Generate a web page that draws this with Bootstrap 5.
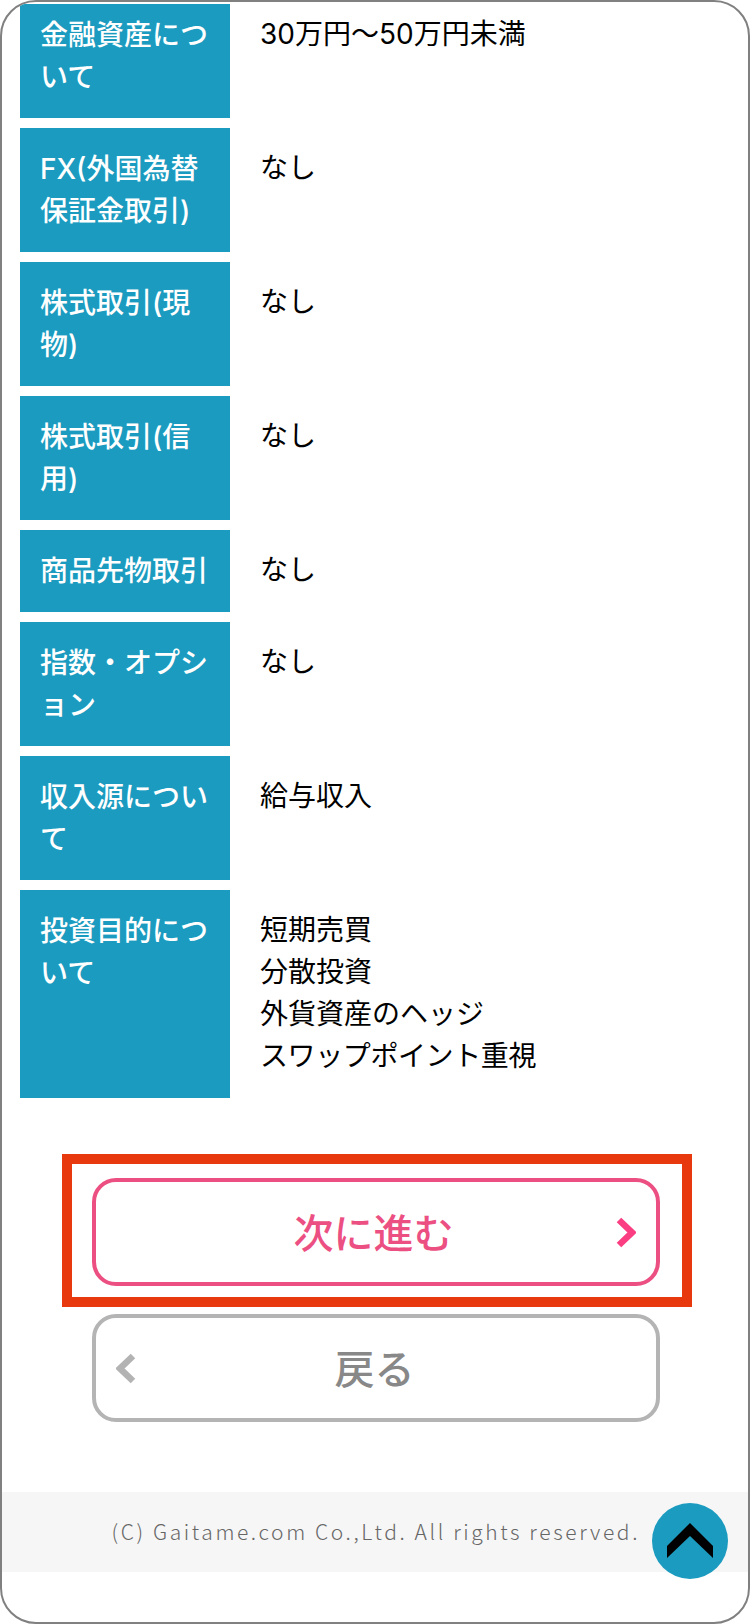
<!DOCTYPE html>
<html lang="ja">
<head>
<meta charset="utf-8">
<title>確認</title>
<link href="https://cdn.jsdelivr.net/npm/bootstrap@5.3.0/dist/css/bootstrap.min.css" rel="stylesheet">
<style>
html, body { margin: 0; background: #fff; }
body { font-family: "Noto Sans CJK JP", "Liberation Sans", sans-serif; color: #000; width: 750px; }
.phone-frame { height: 1624px; border: 2px solid #808080; border-radius: 36px; overflow: hidden; padding-top: 2px; position: relative; }
.info-list { padding-left: 18px; margin: 0; }
.info-row { margin-bottom: 10px; }
.info-row:last-child { margin-bottom: 0; }
.info-head { width: 210px; flex: none; background: #1b9bbf; color: #fff; font-family: Inter, "Noto Sans CJK JP", sans-serif; font-size: 28px; line-height: 42px; font-weight: 500; padding: 20px; margin: 0; }
.info-head.cut-top { padding-top: 10px; }
.info-val { font-family: Inter, "Noto Sans CJK JP", sans-serif; font-size: 28px; line-height: 42px; padding: 19px 0 21px 30px; margin: 0; }
.info-val.cut-top { padding-top: 9px; }
.tight-kana { letter-spacing: -0.4px; }
.next-box { width: 630px; height: 153px; margin: 56px 0 0 60px; border: 10px solid #e8380d; padding: 14px 0 0 20px; }
.act-btn { width: 568px; height: 108px; background: #fff; border-width: 4px; border-style: solid; border-radius: 24px; padding: 0 20px; font-size: 40px; font-weight: 500; line-height: 1; display: grid; grid-template-columns: 1fr auto 1fr; align-items: center; }
.act-label { margin-right: 5px; position: relative; top: -1px; }
.act-back .act-label { margin-right: 3px; }
.act-next { border-color: #ec5082; color: #ec5082; }
.act-next:hover { border-color: #ec5082; color: #ec5082; background: #fff; }
.act-back { border-color: #b4b4b4; color: #888; margin: 7px 0 0 90px; }
.act-back:hover { border-color: #b4b4b4; color: #888; background: #fff; }
.act-next .chev { justify-self: end; }
.act-back .chev { justify-self: start; }
.chev { width: 20px; height: 31px; display: block; }
.foot-band { height: 80px; margin-top: 70px; background: #f6f6f6; color: #666; font-size: 21px; font-weight: 300; letter-spacing: 2.6px; padding-right: 108px; }
.to-top { position: absolute; left: 650px; top: 1501px; width: 76px; height: 76px; border-radius: 50%; background: #1b9bbf; }
.to-top svg { display: block; }
</style>
</head>
<body>
<div class="phone-frame">
  <div class="info-list">
    <div class="info-row d-flex"><h2 class="info-head cut-top">金融資産について</h2><p class="info-val cut-top">30万円〜50万円未満</p></div>
    <div class="info-row d-flex"><h2 class="info-head">FX(外国為替保証金取引)</h2><p class="info-val">なし</p></div>
    <div class="info-row d-flex"><h2 class="info-head">株式取引(現物)</h2><p class="info-val">なし</p></div>
    <div class="info-row d-flex"><h2 class="info-head">株式取引(信用)</h2><p class="info-val">なし</p></div>
    <div class="info-row d-flex"><h2 class="info-head">商品先物取引</h2><p class="info-val">なし</p></div>
    <div class="info-row d-flex"><h2 class="info-head">指数・オプション</h2><p class="info-val">なし</p></div>
    <div class="info-row d-flex"><h2 class="info-head">収入源について</h2><p class="info-val">給与収入</p></div>
    <div class="info-row d-flex"><h2 class="info-head">投資目的について</h2><p class="info-val">短期売買<br>分散投資<br>外貨資産のヘッジ<br><span class="tight-kana">スワップポイント重視</span></p></div>
  </div>
  <div class="next-box">
    <a href="#" class="btn act-btn act-next">
      <span></span><span class="act-label">次に進む</span>
      <svg class="chev" viewBox="0 0 20 31"><polyline points="3,3 16,15.5 3,28" fill="none" stroke="#fb3d82" stroke-width="6.5"/></svg>
    </a>
  </div>
  <a href="#" class="btn act-btn act-back">
    <svg class="chev" viewBox="0 0 20 31"><polyline points="17,3 4,15.5 17,28" fill="none" stroke="#b3b3b3" stroke-width="6.5"/></svg>
    <span class="act-label">戻る</span><span></span>
  </a>
  <footer class="foot-band d-flex align-items-center justify-content-end">(C) Gaitame.com Co.,Ltd. All rights reserved.</footer>
  <a href="#" class="to-top" aria-label="ページ上部へ">
    <svg width="76" height="76" viewBox="0 0 76 76"><polygon points="38,20 61,43 61,55 38,33 15,55 15,43" fill="#000"/></svg>
  </a>
</div>
<script src="https://cdn.jsdelivr.net/npm/bootstrap@5.3.0/dist/js/bootstrap.bundle.min.js"></script>
</body>
</html>
